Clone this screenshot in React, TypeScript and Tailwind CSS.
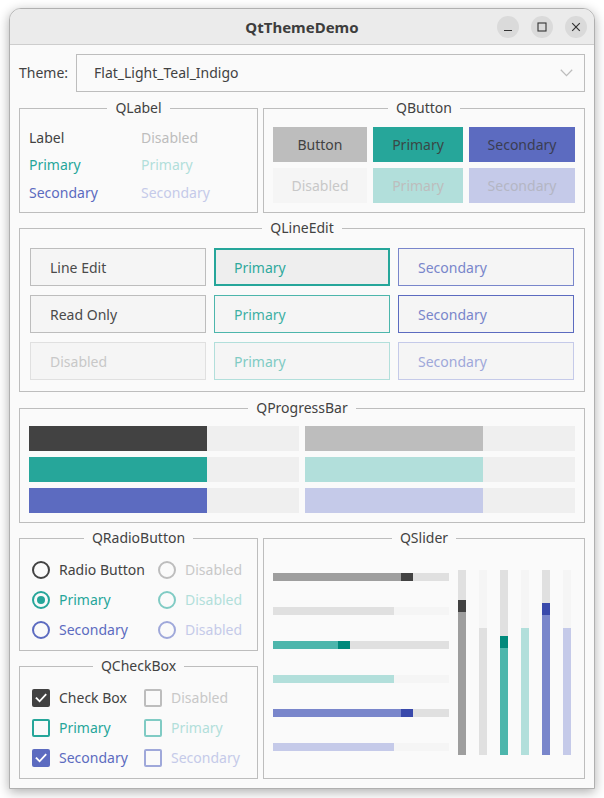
import React from "react";

function Group({ title, className, children }: { title: string; className?: string; children?: React.ReactNode }) {
  return (
    <div className={`relative border border-[#bdbdbd] ${className ?? ""}`}>
      <div className="absolute left-0 right-0 -top-[11px] flex justify-center">
        <span className="bg-[#fafafa] px-[8px] text-[14px] leading-[20px] text-[#424242]">{title}</span>
      </div>
      {children}
    </div>
  );
}

function Check() {
  return (
    <svg width="18" height="18" viewBox="0 0 18 18">
      <path d="M4.5 9.2 L7.6 12.3 L13.6 5.8" fill="none" stroke="#ffffff" strokeWidth="1.8" strokeLinecap="square" />
    </svg>
  );
}

function Radio({ ring, dot, label, text }: { ring: string; dot?: string; label: string; text: string }) {
  return (
    <div className="flex items-center gap-[9px]">
      <div className={`w-[18px] h-[18px] rounded-full border-2 ${ring} flex items-center justify-center`}>
        {dot ? <div className={`w-[8px] h-[8px] rounded-full ${dot}`} /> : null}
      </div>
      <span className={`text-[14px] leading-[20px] ${text}`}>{label}</span>
    </div>
  );
}

function Box({ cls, checked, label, text }: { cls: string; checked?: boolean; label: string; text: string }) {
  return (
    <div className="flex items-center gap-[9px]">
      <div className={`w-[18px] h-[18px] rounded-[2px] ${cls}`}>{checked ? <Check /> : null}</div>
      <span className={`text-[14px] leading-[20px] ${text}`}>{label}</span>
    </div>
  );
}

function HSlider({ fill, fillW, handle, rest }: { fill: string; fillW: string; handle?: string; rest: string }) {
  return (
    <div className="flex h-[8px] w-[176px]">
      <div className={`h-full ${fillW} ${fill}`} />
      {handle ? <div className={`h-full w-[12px] ${handle}`} /> : null}
      <div className={`h-full flex-1 ${rest}`} />
    </div>
  );
}

function VSlider({ fill, restH, handle, rest }: { fill: string; restH: string; handle?: string; rest: string }) {
  return (
    <div className="flex flex-col w-[8px] h-[185px]">
      <div className={`w-full ${restH} ${rest}`} />
      {handle ? <div className={`w-full h-[12px] ${handle}`} /> : null}
      <div className={`w-full flex-1 ${fill}`} />
    </div>
  );
}

export default function App() {
  return (
    <div className="w-[604px] h-[798px] bg-white pt-[8px] pl-[9px] font-['Noto_Sans',sans-serif] text-[#424242]">
      <div className="w-[586px] rounded-t-[12px] border border-[#b0b0b0] bg-[#fafafa] shadow-[0_3px_12px_rgba(0,0,0,0.32)] overflow-hidden">
        {/* title bar */}
        <div className="h-[36px] bg-[#ebebeb] border-b border-[#cdcdcd] grid grid-cols-[1fr_auto_1fr] items-center">
          <div />
          <div className="text-[15px] font-bold text-[#3d3d3d] leading-[20px]">QtThemeDemo</div>
          <div className="flex justify-end gap-[12px] pr-[7px]">
            <div className="w-[22px] h-[22px] rounded-full bg-[#dadada] flex items-center justify-center">
              <svg width="10" height="10" viewBox="0 0 10 10">
                <path d="M1 8.5 H9" stroke="#333" strokeWidth="1.2" />
              </svg>
            </div>
            <div className="w-[22px] h-[22px] rounded-full bg-[#dadada] flex items-center justify-center">
              <svg width="10" height="10" viewBox="0 0 10 10">
                <rect x="1" y="1" width="8" height="8" fill="none" stroke="#333" strokeWidth="1.1" />
              </svg>
            </div>
            <div className="w-[22px] h-[22px] rounded-full bg-[#dadada] flex items-center justify-center">
              <svg width="10" height="10" viewBox="0 0 10 10">
                <path d="M1.2 1.2 L8.8 8.8 M8.8 1.2 L1.2 8.8" stroke="#333" strokeWidth="1.2" />
              </svg>
            </div>
          </div>
        </div>

        {/* content */}
        <div className="px-[9px] pt-[9px] pb-[9px]">
          {/* theme row */}
          <div className="flex h-[38px] items-center">
            <div className="w-[57px] text-[14px] leading-[20px] text-[#424242]">Theme:</div>
            <div className="flex-1 h-full border border-[#bdbdbd] pl-[17px] pr-[11px] flex items-center justify-between">
              <span className="text-[14px] leading-[20px] text-[#424242]">Flat_Light_Teal_Indigo</span>
              <svg width="13" height="8" viewBox="0 0 13 8">
                <path d="M0.8 0.8 L6.5 6.6 L12.2 0.8" fill="none" stroke="#bdbdbd" strokeWidth="1.3" />
              </svg>
            </div>
          </div>

          {/* row 1 */}
          <div className="mt-[16px] flex gap-[5px] h-[105px]">
            <Group title="QLabel" className="w-[239px] h-full">
              <div className="pt-[15px] pl-[9px] grid grid-cols-[112px_1fr] auto-rows-[27.5px] items-center text-[14px] leading-[20px]">
                <span className="text-[#424242]">Label</span>
                <span className="text-[#bdbdbd]">Disabled</span>
                <span className="text-[#26a69a]">Primary</span>
                <span className="text-[#b2dfdb]">Primary</span>
                <span className="text-[#5c6bc0]">Secondary</span>
                <span className="text-[#c5cae9]">Secondary</span>
              </div>
            </Group>
            <Group title="QButton" className="w-[322px] h-full">
              <div className="pt-[18px] pl-[9px] grid grid-cols-[94px_90px_106px] auto-rows-[35px] gap-[6px] text-[14px]">
                <div className="bg-[#bdbdbd] text-[#424242] flex items-center justify-center">Button</div>
                <div className="bg-[#26a69a] text-[#3a4746] flex items-center justify-center">Primary</div>
                <div className="bg-[#5c6bc0] text-[#3a3d52] flex items-center justify-center">Secondary</div>
                <div className="bg-[#f5f5f5] text-[#c8c8c8] flex items-center justify-center">Disabled</div>
                <div className="bg-[#b2dfdb] text-[#bdbdbd] flex items-center justify-center">Primary</div>
                <div className="bg-[#c5cae9] text-[#b4b6c4] flex items-center justify-center">Secondary</div>
              </div>
            </Group>
          </div>

          {/* line edit */}
          <Group title="QLineEdit" className="mt-[15px] h-[164px]">
            <div className="pt-[19px] pl-[10px] grid grid-cols-[176px_176px_176px] auto-rows-[38px] gap-x-[8px] gap-y-[9px] text-[14px]">
              <div className="border border-[#bdbdbd] bg-[#f5f5f5] pl-[19px] flex items-center text-[#4a4a4a]">Line Edit</div>
              <div className="border-2 border-[#26a69a] bg-[#eeeeee] pl-[18px] flex items-center text-[#2fa99d]">Primary</div>
              <div className="border border-[#7986cb] bg-[#f5f5f5] pl-[19px] flex items-center text-[#7986cb]">Secondary</div>
              <div className="border border-[#bdbdbd] bg-[#f5f5f5] pl-[19px] flex items-center text-[#4a4a4a]">Read Only</div>
              <div className="border border-[#4db6ac] bg-[#f5f5f5] pl-[19px] flex items-center text-[#3db0a4]">Primary</div>
              <div className="border border-[#5c6bc0] bg-[#f5f5f5] pl-[19px] flex items-center text-[#7986cb]">Secondary</div>
              <div className="border border-[#e0e0e0] bg-[#f5f5f5] pl-[19px] flex items-center text-[#c8c8c8]">Disabled</div>
              <div className="border border-[#b2dfdb] bg-[#f5f5f5] pl-[19px] flex items-center text-[#80cbc4]">Primary</div>
              <div className="border border-[#c5cae9] bg-[#f5f5f5] pl-[19px] flex items-center text-[#9fa8da]">Secondary</div>
            </div>
          </Group>

          {/* progress bar */}
          <Group title="QProgressBar" className="mt-[16px] h-[115px]">
            <div className="pt-[17px] pl-[9px] grid grid-cols-[270px_270px] auto-rows-[25px] gap-[6px]">
              {[
                ["bg-[#424242]", "bg-[#bdbdbd]"],
                ["bg-[#26a69a]", "bg-[#b2dfdb]"],
                ["bg-[#5c6bc0]", "bg-[#c5cae9]"],
              ].map(([a, b], i) => (
                <React.Fragment key={i}>
                  <div className="flex bg-[#efefef]">
                    <div className={`w-[178px] h-full ${a}`} />
                  </div>
                  <div className="flex bg-[#efefef]">
                    <div className={`w-[178px] h-full ${b}`} />
                  </div>
                </React.Fragment>
              ))}
            </div>
          </Group>

          {/* bottom row */}
          <div className="mt-[15px] flex gap-[5px] h-[241px]">
            <div className="w-[239px] flex flex-col">
              <Group title="QRadioButton" className="h-[113px]">
                <div className="pt-[16px] pl-[12px] grid grid-cols-[126px_1fr] auto-rows-[30px] items-center">
                  <Radio ring="border-[#424242]" label="Radio Button" text="text-[#424242]" />
                  <Radio ring="border-[#bdbdbd]" label="Disabled" text="text-[#c8c8c8]" />
                  <Radio ring="border-[#26a69a]" dot="bg-[#26a69a]" label="Primary" text="text-[#26a69a]" />
                  <Radio ring="border-[#80cbc4]" label="Disabled" text="text-[#b2dfdb]" />
                  <Radio ring="border-[#5c6bc0]" label="Secondary" text="text-[#5c6bc0]" />
                  <Radio ring="border-[#9fa8da]" label="Disabled" text="text-[#c5cae9]" />
                </div>
              </Group>
              <Group title="QCheckBox" className="mt-[15px] h-[113px]">
                <div className="pt-[16px] pl-[12px] grid grid-cols-[112px_1fr] auto-rows-[30px] items-center">
                  <Box cls="bg-[#424242]" checked label="Check Box" text="text-[#424242]" />
                  <Box cls="border-2 border-[#bdbdbd]" label="Disabled" text="text-[#c8c8c8]" />
                  <Box cls="border-2 border-[#26a69a]" label="Primary" text="text-[#26a69a]" />
                  <Box cls="border-2 border-[#80cbc4]" label="Primary" text="text-[#b2dfdb]" />
                  <Box cls="bg-[#5c6bc0]" checked label="Secondary" text="text-[#5c6bc0]" />
                  <Box cls="border-2 border-[#9fa8da]" label="Secondary" text="text-[#c5cae9]" />
                </div>
              </Group>
            </div>
            <Group title="QSlider" className="w-[322px] h-full">
              <div className="flex pl-[9px]">
                <div className="w-[176px] pt-[21px] flex flex-col">
                  <div className="h-[34px] flex items-center">
                    <HSlider fill="bg-[#9e9e9e]" fillW="w-[128px]" handle="bg-[#424242]" rest="bg-[#e0e0e0]" />
                  </div>
                  <div className="h-[34px] flex items-center">
                    <HSlider fill="bg-[#e0e0e0]" fillW="w-[121px]" rest="bg-[#f5f5f5]" />
                  </div>
                  <div className="h-[34px] flex items-center">
                    <HSlider fill="bg-[#4db6ac]" fillW="w-[65px]" handle="bg-[#00897b]" rest="bg-[#e0e0e0]" />
                  </div>
                  <div className="h-[34px] flex items-center">
                    <HSlider fill="bg-[#b2dfdb]" fillW="w-[121px]" rest="bg-[#f5f5f5]" />
                  </div>
                  <div className="h-[34px] flex items-center">
                    <HSlider fill="bg-[#7986cb]" fillW="w-[128px]" handle="bg-[#3949ab]" rest="bg-[#e0e0e0]" />
                  </div>
                  <div className="h-[34px] flex items-center">
                    <HSlider fill="bg-[#c5cae9]" fillW="w-[121px]" rest="bg-[#f5f5f5]" />
                  </div>
                </div>
                <div className="ml-[9px] pt-[31px] flex gap-[13px]">
                  <VSlider rest="bg-[#e0e0e0]" restH="h-[30px]" handle="bg-[#424242]" fill="bg-[#9e9e9e]" />
                  <VSlider rest="bg-[#f5f5f5]" restH="h-[58px]" fill="bg-[#e0e0e0]" />
                  <VSlider rest="bg-[#e0e0e0]" restH="h-[66px]" handle="bg-[#00897b]" fill="bg-[#4db6ac]" />
                  <VSlider rest="bg-[#f5f5f5]" restH="h-[58px]" fill="bg-[#b2dfdb]" />
                  <VSlider rest="bg-[#e0e0e0]" restH="h-[33px]" handle="bg-[#3949ab]" fill="bg-[#7986cb]" />
                  <VSlider rest="bg-[#f5f5f5]" restH="h-[58px]" fill="bg-[#c5cae9]" />
                </div>
              </div>
            </Group>
          </div>
        </div>
      </div>
    </div>
  );
}
